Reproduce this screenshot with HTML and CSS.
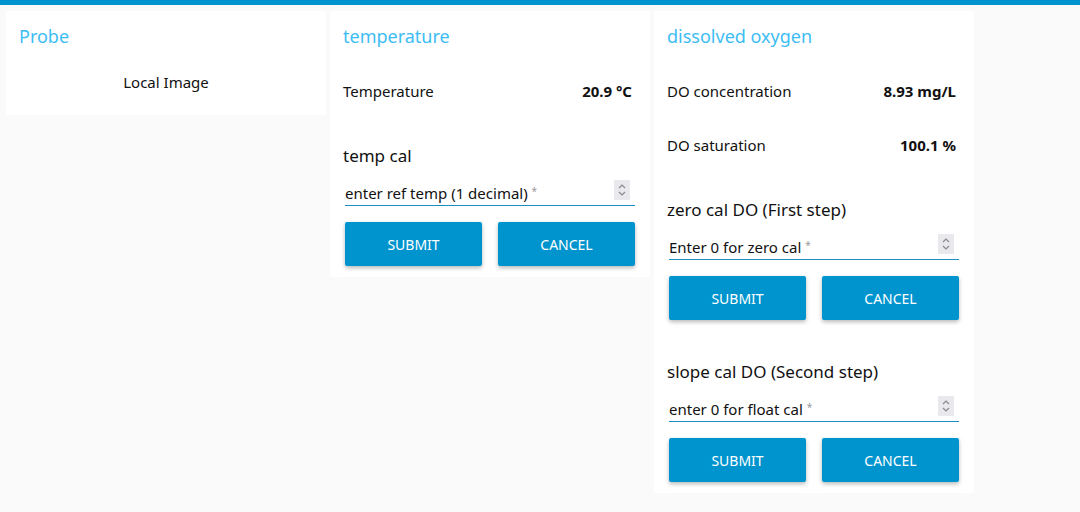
FILE: index.html
```html
<!DOCTYPE html>
<html>
<head>
<meta charset="utf-8">
<link rel="stylesheet" href="styles.css">
</head>
<body>
<div class="topbar"></div>
<main class="groups">
  <section class="card card-probe">
    <div class="card-title short">Probe</div>
    <div class="row row-center">Local Image</div>
  </section>

  <section class="card">
    <div class="card-title">temperature</div>
    <div class="widgets">
      <div class="row"><span>Temperature</span><span class="val">20.9 °C</span></div>
      <div class="form">
        <div class="form-title">temp cal</div>
        <div class="form-body">
          <div class="field"><span class="ph">enter ref temp (1 decimal) <sup class="req">*</sup></span><span class="spin"><svg width="16" height="20" viewBox="0 0 16 20"><path d="M5 8 L8 5 L11 8 M5 12 L8 15 L11 12" fill="none" stroke="#8a8a8a" stroke-width="1.2"/></svg></span></div>
          <div class="btns"><button class="btn">Submit</button><button class="btn">Cancel</button></div>
        </div>
      </div>
    </div>
  </section>

  <section class="card">
    <div class="card-title">dissolved oxygen</div>
    <div class="widgets">
      <div class="row"><span>DO concentration</span><span class="val">8.93 mg/L</span></div>
      <div class="row"><span>DO saturation</span><span class="val">100.1 %</span></div>
      <div class="form">
        <div class="form-title">zero cal DO (First step)</div>
        <div class="form-body">
          <div class="field"><span class="ph">Enter 0 for zero cal <sup class="req">*</sup></span><span class="spin"><svg width="16" height="20" viewBox="0 0 16 20"><path d="M5 8 L8 5 L11 8 M5 12 L8 15 L11 12" fill="none" stroke="#8a8a8a" stroke-width="1.2"/></svg></span></div>
          <div class="btns"><button class="btn">Submit</button><button class="btn">Cancel</button></div>
        </div>
      </div>
      <div class="form">
        <div class="form-title">slope cal DO (Second step)</div>
        <div class="form-body">
          <div class="field"><span class="ph">enter 0 for float cal <sup class="req">*</sup></span><span class="spin"><svg width="16" height="20" viewBox="0 0 16 20"><path d="M5 8 L8 5 L11 8 M5 12 L8 15 L11 12" fill="none" stroke="#8a8a8a" stroke-width="1.2"/></svg></span></div>
          <div class="btns"><button class="btn">Submit</button><button class="btn">Cancel</button></div>
        </div>
      </div>
    </div>
  </section>
</main>
</body>
</html>
```

FILE: styles.css
```css
* { box-sizing: border-box; }
html, body { margin: 0; padding: 0; }
body {
  background: #fafafa;
  font-family: "Noto Sans", "Open Sans", sans-serif;
  color: #111;
  width: 1080px;
  height: 512px;
  overflow: hidden;
}
.topbar { height: 5px; background: #0094ce; }
.groups {
  display: flex;
  align-items: flex-start;
  gap: 4px;
  padding: 6px;
}
.card {
  width: 320px;
  background: #fff;
}
.card-probe { padding-bottom: 9px; }
.card-title {
  height: 56px;
  padding: 13px 13px 0;
  font-size: 18px;
  line-height: 24px;
  color: #3dbdf5;
}
.card-title.short { height: 47px; }
.widgets {
  display: flex;
  flex-direction: column;
  gap: 6px;
}
.row {
  height: 48px;
  display: flex;
  align-items: center;
  justify-content: space-between;
  padding: 0 18px 0 13px;
  font-size: 15px;
}
.row-center { justify-content: center; padding: 0; }
.val { font-weight: 700; }
.form { height: 156px; padding-top: 24px; }
.form-title {
  padding: 0 13px;
  font-size: 17px;
  line-height: 22px;
}
.form-body { padding: 0 15px; }
.field {
  margin-top: 14px;
  height: 25px;
  border-bottom: 1px solid #1a8fc4;
  display: flex;
  justify-content: space-between;
  align-items: flex-start;
  padding-right: 5px;
}
.ph { font-size: 15px; line-height: 24px; }
.req { color: #999; font-size: 10px; vertical-align: top; position: relative; top: -2px; }
.spin {
  width: 16px;
  height: 20px;
  margin-top: -1px;
  background: #e9e9ed;
  display: block;
}
.spin svg { display: block; }
.btns {
  margin-top: 16px;
  display: flex;
  gap: 16px;
}
.btn {
  width: 137px;
  height: 44px;
  border: 0;
  border-radius: 2px;
  background: #0094ce;
  color: #fff;
  font-family: "Noto Sans", "Open Sans", sans-serif;
  font-size: 14px;
  text-transform: uppercase;
  box-shadow: 0 2px 4px rgba(0,0,0,0.28);
  padding: 0;
}
```
